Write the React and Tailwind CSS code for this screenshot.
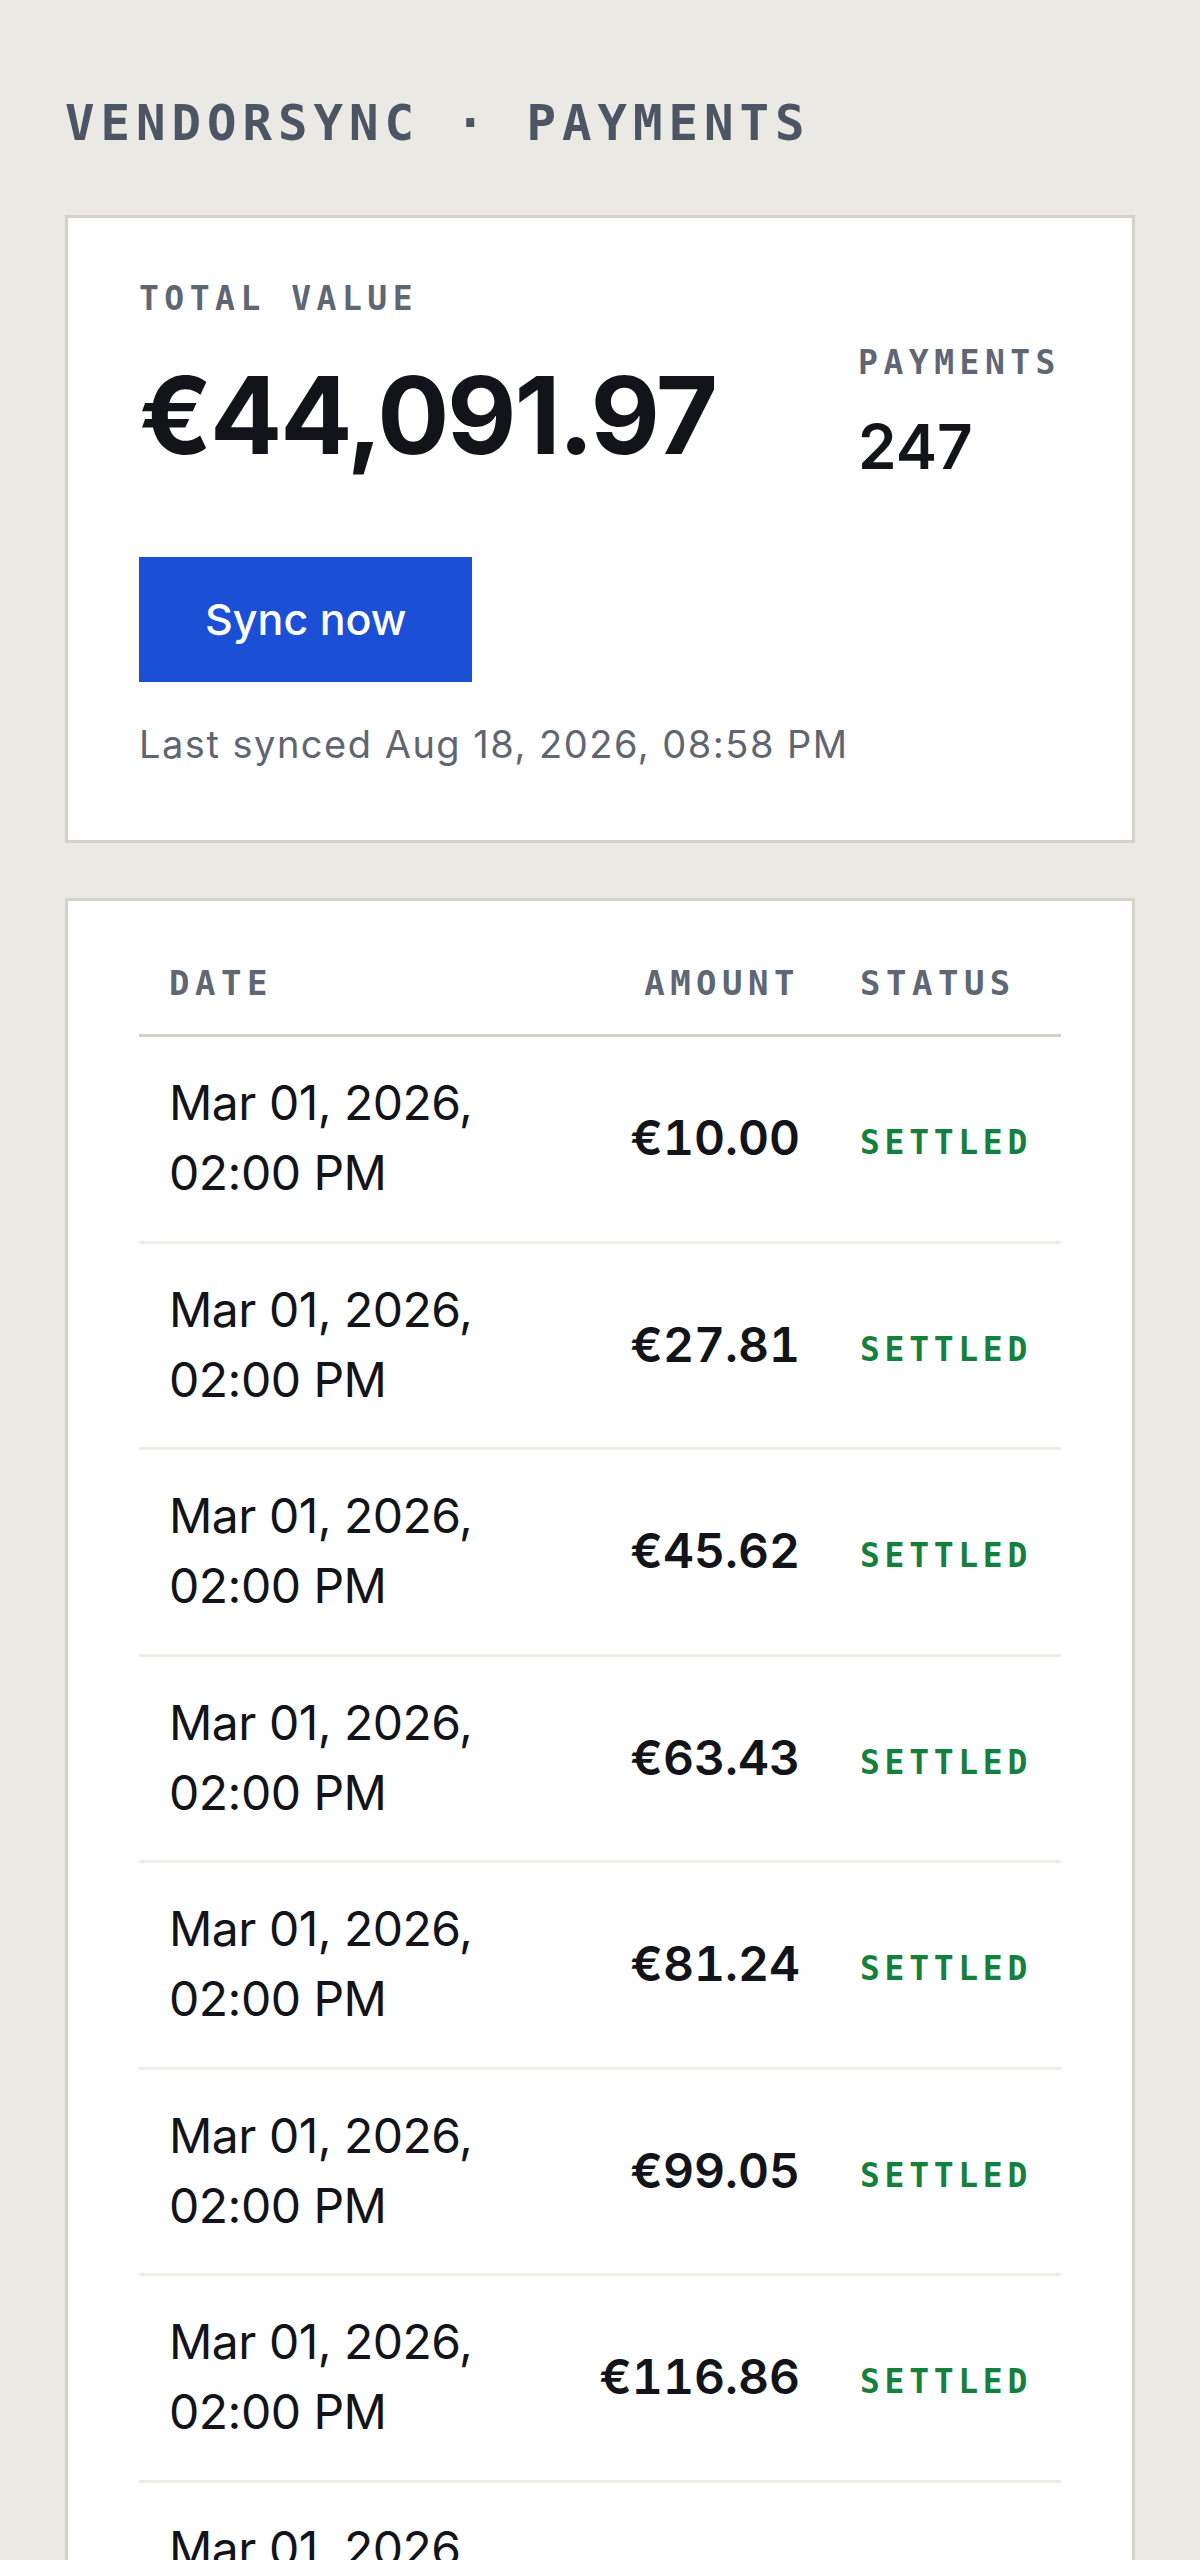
import React from 'react'

const mono = "font-['DejaVu_Sans_Mono',monospace] font-bold"

const rows = Array.from({ length: 10 }, (_, i) => ({
  id: i,
  when: 'Mar 01, 2026, 02:00 PM',
  amount: 10 + 17.81 * i,
  status: 'SETTLED',
}))

const euro = (n) =>
  '€' + n.toLocaleString('en-US', { minimumFractionDigits: 2, maximumFractionDigits: 2 })

const cols = 'grid grid-cols-[420px_272px_232px]'

export default function App() {
  return (
    <div className="min-h-screen bg-[#ebe9e4] px-[65px] pt-[99px] pb-[80px] font-['Inter',sans-serif] text-[#121419]">
      <h1 className={`${mono} text-[49px] leading-none tracking-[6px] text-[#4b5563]`}>
        VENDORSYNC · PAYMENTS
      </h1>

      {/* summary */}
      <section className="mt-[67px] border-[3px] border-[#d5d2c9] bg-white px-[71px] pt-[64px] pb-[77px]">
        <div className="flex items-start justify-between">
          <div>
            <p className={`${mono} text-[33px] leading-none tracking-[5.5px] text-[#5f6775]`}>TOTAL VALUE</p>
            <p className="mt-[47px] text-[107px] font-bold leading-none tracking-[-2.2px]">€44,091.97</p>
          </div>
          <div className="mt-[64px]">
            <p className={`${mono} text-[33px] leading-none tracking-[5.5px] text-[#5f6775]`}>PAYMENTS</p>
            <p className="mt-[37px] text-[62px] font-semibold leading-none">247</p>
          </div>
        </div>
        <button className="mt-[79px] flex h-[125px] items-center bg-[#1a4fd6] px-[66px] text-[43px] font-medium text-white">
          Sync now
        </button>
        <p className="mt-[43px] text-[38px] leading-none tracking-[1.5px] text-[#5f6672]">
          Last synced Aug 18, 2026, 08:58 PM
        </p>
      </section>

      {/* payments table */}
      <section className="mt-[55px] border-[3px] border-[#d5d2c9] bg-white px-[71px] pt-[65px]">
        <div className={`${cols} border-b-[3px] border-[#d3d0c7] pb-[34px] ${mono} text-[34px] leading-none tracking-[5.5px] text-[#5f6775]`}>
          <div className="pl-[30px]">DATE</div>
          <div className="pr-[31px] text-right">AMOUNT</div>
          <div className="pl-[29px]">STATUS</div>
        </div>
        {rows.map((r) => (
          <div key={r.id} className={`${cols} items-center border-b-[3px] border-[#efede8] pt-[31px] pb-[32.5px]`}>
            <div className="pl-[30px] text-[48px] leading-[70px] tracking-[-0.5px]">{r.when}</div>
            <div className="pr-[31px] text-right text-[48px] font-semibold leading-none tabular-nums">{euro(r.amount)}</div>
            <div className="pl-[29px] pt-[10px]">
              <span className={`${mono} text-[33px] leading-none tracking-[4.7px] text-[#15803d]`}>{r.status}</span>
            </div>
          </div>
        ))}
      </section>
    </div>
  )
}
